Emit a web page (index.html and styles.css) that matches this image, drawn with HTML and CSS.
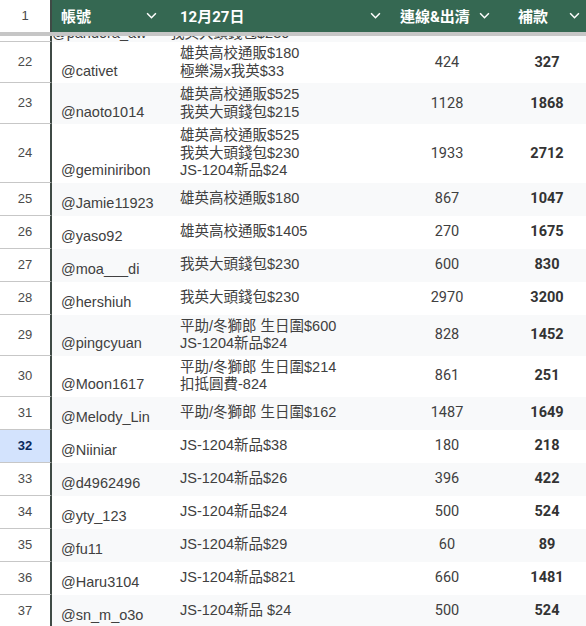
FILE: index.html
```html
<!DOCTYPE html>
<html lang="zh-Hant">
<head>
<meta charset="utf-8">
<title>Sheet</title>
<link rel="stylesheet" href="styles.css">
</head>
<body>
<div class="sheet">
  <div class="row head">
    <div class="rh">1</div>
    <div class="hc hc-a"><span>帳號</span><svg class="chev" viewBox="0 0 10 6"><polyline points="1,1 5,5 9,1"/></svg></div>
    <div class="hc hc-b"><span>12月27日</span><svg class="chev" viewBox="0 0 10 6"><polyline points="1,1 5,5 9,1"/></svg></div>
    <div class="hc hc-c"><span>連線&amp;出清</span><svg class="chev" viewBox="0 0 10 6"><polyline points="1,1 5,5 9,1"/></svg></div>
    <div class="hc hc-d"><span>補款</span><svg class="chev" viewBox="0 0 10 6"><polyline points="1,1 5,5 9,1"/></svg></div>
  </div>
  <div class="freeze"></div>

  <div class="row partial alt">
    <div class="rh"></div>
    <div class="c name">@pandora_aw</div>
    <div class="c item">我英大頭錢包$230</div>
    <div class="c num"></div>
    <div class="c num b"></div>
  </div>

  <div class="row">
    <div class="rh">22</div>
    <div class="c name">@cativet</div>
    <div class="c item">雄英高校通販$180<br>極樂湯x我英$33</div>
    <div class="c num">424</div>
    <div class="c num b">327</div>
  </div>
  <div class="row alt">
    <div class="rh">23</div>
    <div class="c name">@naoto1014</div>
    <div class="c item">雄英高校通販$525<br>我英大頭錢包$215</div>
    <div class="c num">1128</div>
    <div class="c num b">1868</div>
  </div>
  <div class="row">
    <div class="rh">24</div>
    <div class="c name">@geminiribon</div>
    <div class="c item">雄英高校通販$525<br>我英大頭錢包$230<br>JS-1204新品$24</div>
    <div class="c num">1933</div>
    <div class="c num b">2712</div>
  </div>
  <div class="row alt">
    <div class="rh">25</div>
    <div class="c name">@Jamie11923</div>
    <div class="c item">雄英高校通販$180</div>
    <div class="c num">867</div>
    <div class="c num b">1047</div>
  </div>
  <div class="row">
    <div class="rh">26</div>
    <div class="c name">@yaso92</div>
    <div class="c item">雄英高校通販$1405</div>
    <div class="c num">270</div>
    <div class="c num b">1675</div>
  </div>
  <div class="row alt">
    <div class="rh">27</div>
    <div class="c name">@moa___di</div>
    <div class="c item">我英大頭錢包$230</div>
    <div class="c num">600</div>
    <div class="c num b">830</div>
  </div>
  <div class="row">
    <div class="rh">28</div>
    <div class="c name">@hershiuh</div>
    <div class="c item">我英大頭錢包$230</div>
    <div class="c num">2970</div>
    <div class="c num b">3200</div>
  </div>
  <div class="row alt">
    <div class="rh">29</div>
    <div class="c name">@pingcyuan</div>
    <div class="c item">平助/冬獅郎 生日圍$600<br>JS-1204新品$24</div>
    <div class="c num">828</div>
    <div class="c num b">1452</div>
  </div>
  <div class="row">
    <div class="rh">30</div>
    <div class="c name">@Moon1617</div>
    <div class="c item">平助/冬獅郎 生日圍$214<br>扣抵圓費-824</div>
    <div class="c num">861</div>
    <div class="c num b">251</div>
  </div>
  <div class="row alt">
    <div class="rh">31</div>
    <div class="c name">@Melody_Lin</div>
    <div class="c item">平助/冬獅郎 生日圍$162</div>
    <div class="c num">1487</div>
    <div class="c num b">1649</div>
  </div>
  <div class="row">
    <div class="rh sel">32</div>
    <div class="c name">@Niiniar</div>
    <div class="c item">JS-1204新品$38</div>
    <div class="c num">180</div>
    <div class="c num b">218</div>
  </div>
  <div class="row alt">
    <div class="rh">33</div>
    <div class="c name">@d4962496</div>
    <div class="c item">JS-1204新品$26</div>
    <div class="c num">396</div>
    <div class="c num b">422</div>
  </div>
  <div class="row">
    <div class="rh">34</div>
    <div class="c name">@yty_123</div>
    <div class="c item">JS-1204新品$24</div>
    <div class="c num">500</div>
    <div class="c num b">524</div>
  </div>
  <div class="row alt">
    <div class="rh">35</div>
    <div class="c name">@fu11</div>
    <div class="c item">JS-1204新品$29</div>
    <div class="c num">60</div>
    <div class="c num b">89</div>
  </div>
  <div class="row">
    <div class="rh">36</div>
    <div class="c name">@Haru3104</div>
    <div class="c item">JS-1204新品$821</div>
    <div class="c num">660</div>
    <div class="c num b">1481</div>
  </div>
  <div class="row alt">
    <div class="rh">37</div>
    <div class="c name">@sn_m_o3o</div>
    <div class="c item">JS-1204新品 $24</div>
    <div class="c num">500</div>
    <div class="c num b">524</div>
  </div>
</div>
</body>
</html>
```
FILE: styles.css
```css
* { box-sizing: border-box; }
html, body { margin: 0; padding: 0; background: #fff; }
body { width: 586px; height: 626px; overflow: hidden; }

.sheet {
  width: 586px;
  font-family: "Liberation Sans", "Noto Sans CJK TC", sans-serif;
  color: #404040;
}

.row {
  display: grid;
  grid-template-columns: 52px 118px 220px 118px 78px;
  min-height: 33px;
  background: #fff;
}
.row.alt { background: #f8f9fa; }

.rh {
  background: #fff;
  border-right: 2px solid #3f4a45;
  border-bottom: 1px solid #c7c7c7;
  display: flex;
  align-items: center;
  justify-content: center;
  font-family: "Liberation Sans", sans-serif;
  font-size: 13px;
  color: #4a4a4a;
  padding-bottom: 1px;
}
.rh.sel {
  background: #d3e3fd;
  color: #0b2a5c;
  font-weight: bold;
}

.head {
  height: 32px;
  min-height: 32px;
  background: #356852;
}
.head .rh {
  border-bottom: none;
  padding-bottom: 2px;
}
.hc {
  display: flex;
  align-items: center;
  justify-content: space-between;
  color: #fff;
  font-family: "Roboto", "Noto Sans CJK TC", sans-serif;
  font-weight: bold;
  font-size: 15px;
  padding-bottom: 2px;
}
.hc-a { padding-left: 9px; padding-right: 13px; }
.hc-b { padding-left: 10px; padding-right: 9px; }
.hc-c { padding-left: 10px; padding-right: 18px; }
.hc-d { padding-left: 10px; padding-right: 6px; }
.chev {
  width: 11px;
  height: 7px;
  fill: none;
  stroke: #fff;
  stroke-width: 1.4;
}

.freeze {
  height: 4px;
  background: #c6c6c6;
}

.c {
  font-size: 14.5px;
  line-height: 17.5px;
  padding: 3px 0;
  display: flex;
  flex-direction: column;
  white-space: nowrap;
}
.name {
  justify-content: flex-end;
  padding-left: 9px;
}
.item {
  justify-content: center;
  padding-left: 10px;
  display: block;
  align-self: center;
}
.num {
  justify-content: center;
  align-items: center;
  font-family: "Roboto", sans-serif;
  padding-right: 4px;
}
.num.b { font-weight: bold; color: #333; padding-right: 0; }

.partial {
  height: 6px;
  min-height: 6px;
  overflow: hidden;
}
.partial .c {
  height: 6px;
  padding: 0;
  justify-content: flex-end;
  overflow: hidden;
}
.partial .item {
  display: flex;
  align-self: stretch;
}
.partial .rh { border-bottom: 1px solid #c7c7c7; }
```
